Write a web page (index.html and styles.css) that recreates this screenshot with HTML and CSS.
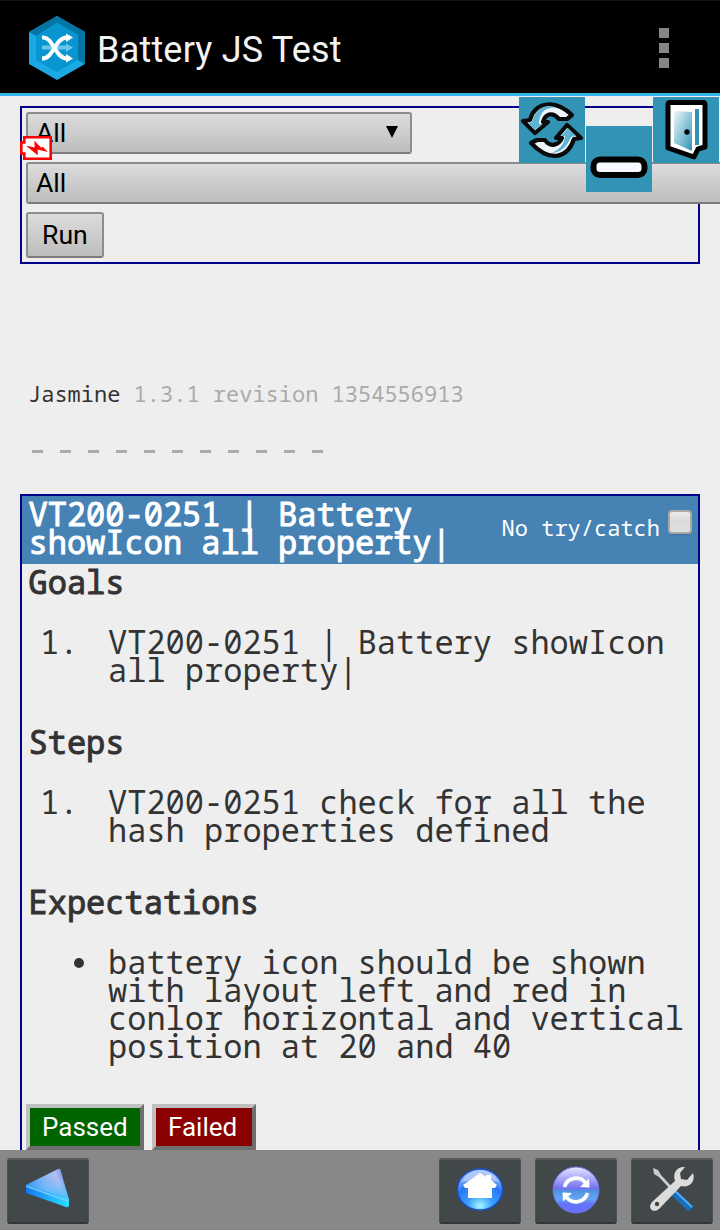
FILE: index.html
```html
<!DOCTYPE html>
<html lang="en">
<head>
<meta charset="utf-8">
<title>Battery JS Test</title>
<link rel="stylesheet" href="styles.css">
</head>
<body>
<div class="screen">
  <header class="appbar">
    <svg class="logo" width="56" height="64" viewBox="0 0 56 64">
      <path fill="#1aa9e4" d="M28 0 56 16V48L28 64 0 48V16Z"/>
      <path fill="#0575a6" d="M0 16 28 0 56 16V48L49 44V19L28 7 7 20Z"/>
      <path fill="#0796d2" d="M28 7 49 19V44L28 56 7 44V20Z"/>
      <path fill="#6bc5e9" d="M13 29.500H37V27.500L44 31.500 37 36V33.500H13Z"/>
      <g fill="none" stroke="#fff" stroke-width="4"><path d="M13 21.500C24 20 26 42.500 38 42.500"/><path d="M13 42.500C25 42.500 26 21.500 38 21.500"/></g>
      <path fill="#fff" d="M37 17.500 44 21.500 37 26ZM37 38 44 42.500 37 46.500Z"/>
    </svg>
    <h1 class="app-title">Battery JS Test</h1>
    <div class="overflow"><i></i><i></i><i></i></div>
  </header>

  <main class="page">
    <section class="filters">
      <div class="control select">All<span class="arrow"></span></div>
      <div class="control select wide">All</div>
      <div class="control run">Run</div>
    </section>

    <p class="version">Jasmine <span>1.3.1 revision 1354556913</span></p>
    <div class="dots"><i></i><i></i><i></i><i></i><i></i><i></i><i></i><i></i><i></i><i></i><i></i></div>

    <section class="spec">
      <div class="spec-head">
        <h2 class="bold">VT200-0251 | Battery<br>showIcon all property|</h2>
        <span class="try">No try/catch</span><span class="check"></span>
      </div>
      <div class="spec-body">
        <h3 class="bold">Goals</h3>
        <div class="item"><span class="num">1.</span><p>VT200-0251 | Battery showIcon<br>all property|</p></div>
        <h3 class="bold">Steps</h3>
        <div class="item"><span class="num">1.</span><p>VT200-0251 check for all the<br>hash properties defined</p></div>
        <h3 class="bold">Expectations</h3>
        <div class="item"><span class="bullet"></span><p>battery icon should be shown<br>with layout left and red in<br>conlor horizontal and vertical<br>position at 20 and 40</p></div>
      </div>
      <div class="verdict"><div class="passed">Passed</div><div class="failed">Failed</div></div>
    </section>
  </main>

  <footer class="toolbar">
    <div class="key">
      <svg width="80" height="64" viewBox="0 0 80 64">
        <defs>
          <linearGradient id="bk" x1="0" y1=".6" x2="1" y2=".3"><stop offset="0" stop-color="#168df5"/><stop offset=".4" stop-color="#7fb2f5"/><stop offset=".75" stop-color="#b3bff2"/><stop offset="1" stop-color="#5385ec"/></linearGradient>
          <linearGradient id="bk2" x1="0" y1="0" x2="0" y2="1"><stop offset=".3" stop-color="#6fb4f8" stop-opacity="0"/><stop offset="1" stop-color="#35c6ff"/></linearGradient>
          <linearGradient id="be"><stop offset="0" stop-color="#1478f2"/><stop offset="1" stop-color="#2be0ff"/></linearGradient>
        </defs>
        <path fill="url(#bk)" d="M18 25 50 9Q52 8 52.500 10L61 40Z"/><path fill="url(#bk2)" d="M18 25 50 9Q52 8 52.500 10L61 40Z"/>
        <path fill="url(#be)" d="M18 25 61 39V45Q61 48 58 47L18 33Z"/>
        <path fill="none" stroke="#79c9ff" stroke-width="1.500" d="M18 26 60 41"/>
      </svg>
    </div>
    <div class="key push">
      <svg width="80" height="64" viewBox="0 0 80 64">
        <defs><radialGradient id="hm" cx=".5" cy=".9" r=".8"><stop offset="0" stop-color="#a8f4ff"/><stop offset=".35" stop-color="#39a0ff"/><stop offset=".7" stop-color="#2875f5"/><stop offset="1" stop-color="#95baff"/></radialGradient></defs>
        <ellipse cx="40" cy="29.500" rx="22.500" ry="20.500" fill="url(#hm)" stroke="#1652ce" stroke-width="1.500"/>
        <path fill="#bcd2ff" opacity=".75" d="M22 22Q28 10 40 10.500 53 10 59 22 40 18 22 22Z"/>
        <path fill="#fff" d="M40 13 46 17V15H51V20L57 25 55 28H52V38H28V28H25L23 25Z"/>
      </svg>
    </div>
    <div class="key">
      <svg width="80" height="64" viewBox="0 0 80 64">
        <defs><linearGradient id="rf" x1="0" y1="0" x2="0" y2="1"><stop offset="0" stop-color="#e6e6ff"/><stop offset=".25" stop-color="#aaa9fa"/><stop offset=".48" stop-color="#716fee"/><stop offset=".5" stop-color="#4f91df"/><stop offset=".7" stop-color="#63a5f4"/><stop offset=".8" stop-color="#6575fa"/><stop offset="1" stop-color="#646dfb"/></linearGradient></defs>
        <circle cx="40" cy="30" r="23" fill="url(#rf)" stroke="#6878e5"/>
        <g fill="none" stroke="#fff" stroke-width="3.800"><path d="M28.500 27A12 12 0 0 1 50 23.500"/><path d="M51.500 33A12 12 0 0 1 30 36.500"/></g>
        <path fill="#fff" d="M44 27 53 18.500 53.500 27.500ZM36 33 27 41.500 26.500 32.500Z"/>
      </svg>
    </div>
    <div class="key">
      <svg width="80" height="64" viewBox="0 0 80 64">
        <path fill="#ccc" d="M21 8 26 10 29 15 41 28 39 30 27 17 22 14Z"/>
        <path stroke="#176fc0" stroke-width="7" d="M40 31 59 49"/><path stroke="#55a8ec" stroke-width="2" d="M42 30 60 47"/>
        <path fill="#dcdcdb" d="M53 7 48 13 49 19 55 20 61 13C64 22 57 28 49 26L27 49C21 54 15 48 20 42L43 21C40 12 46 6 53 7Z"/>
        <circle cx="25" cy="44" r="2.200" fill="#444"/>
      </svg>
    </div>
  </footer>

  <svg class="battery" width="32" height="24" viewBox="0 0 32 24">
    <path fill="#fff" stroke="#f00" stroke-width="2.600" d="M4.300 1.300H30.700V22.700H4.300V17.500H1.300V6.500H4.300Z"/>
    <path fill="#f00" d="M6 9.700 14.700 11.500 14.300 4.700 21.500 12 22.500 10.500 28 16 17.700 13.500V19.300Z"/>
  </svg>
  <svg class="float refresh" viewBox="0 0 66 66">
    <g stroke="#0a0a0a" stroke-width="4.200" stroke-linejoin="round">
      <path fill="#eef8fc" d="M4 24 11 23C15 7 34 0 53 18L48 22 40 22C33 14 26 17 24 25L29 25 16 36Z"/>
      <path fill="#eef8fc" d="M12 46 18 43 26 43C31 51 40 48 43 41L37 41 48 28 62 41 55 42C49 60 32 67 12 46Z"/>
    </g>
    <path fill="#61b3d2" d="M9 26 13 25C17 11 26 7 36 10 23 12 21 17 20 27L23 27 16 33Z"/>
    <path fill="#61b3d2" d="M49 31 57 39 52 40C48 50 42 55 33 56 43 51 45 46 46 39L42 39Z"/>
  </svg>
  <svg class="float minus" viewBox="0 0 66 66"><rect x="7.500" y="33.500" width="51" height="15.500" rx="6.500" fill="#f7fbff" stroke="#000" stroke-width="6"/></svg>
  <svg class="float door" viewBox="0 0 66 66">
    <defs><linearGradient id="dr" x1="0" y1="0" x2="1" y2="1"><stop offset="0" stop-color="#eef7fa"/><stop offset=".5" stop-color="#8fc6d8"/><stop offset="1" stop-color="#2f94b5"/></linearGradient></defs>
    <path fill="#fff" stroke="#000" stroke-width="5" stroke-linejoin="round" d="M17 5.500H50Q52 5.500 52 8V50L45 52 41 60 15 51V8Q15 5.500 17 5.500Z"/>
    <path fill="url(#dr)" d="M21 14 39 15V54L21 46Z"/><path fill="#3093b2" d="M42 12H46V48H42Z"/><circle cx="34" cy="35" r="2.700"/>
  </svg>
</div>
</body>
</html>
```

FILE: styles.css
```css
* { box-sizing: border-box; }
body, h1, h2, h3, p { margin: 0; }
body { background: #eee; overflow: hidden; }
.screen {
  position: relative; display: flex; flex-direction: column;
  width: 720px; height: 1230px; overflow: hidden;
  font: 32px/28px "Droid Sans Mono", "Noto Sans Mono", "DejaVu Sans Mono", monospace;
  color: #333;
}
.appbar {
  display: flex; align-items: center; flex: none; height: 96px; padding: 0 50px 0 29px;
  background: #000; border-top: 1px solid #151515; border-bottom: 3px solid #33b5e5;
}
.logo { margin-top: 1px; }
.app-title { margin: 6px 0 0 12px; font: 400 36px/42px Roboto, sans-serif; letter-spacing: .2px; color: #f3f3f3; }
.overflow { display: grid; gap: 5px; margin: 1px 1px 0 auto; }
.overflow i { width: 10px; height: 10px; background: #868686; }

.page { flex: 1; min-height: 0; overflow: hidden; padding: 10px 20px 0; }
.filters {
  display: flex; flex-direction: column; align-items: flex-start; gap: 8px;
  height: 158px; padding: 4px; border: 2px solid #00008b;
}
.control {
  display: flex; align-items: center; flex: none; height: 42px; padding: 0 8px;
  border: 2px solid #8d8d8d; border-bottom-color: #7c7c7c; border-radius: 3px;
  background: linear-gradient(#dcdcdc, #bdbdbd);
  font: 26.600px/30px Roboto, sans-serif; color: #000;
}
.select { width: 386px; }
.wide { width: 760px; }
.run { width: 78px; height: 46px; padding-left: 14px; }
.arrow { margin: -2px 4px 0 auto; border: 6px solid transparent; border-top: 12px solid #000; border-bottom: 0; }

.version { margin: 115px 0 0 8px; font-size: 22px; line-height: 28px; white-space: nowrap; }
.version span { color: #aaa; }
.dots { display: flex; gap: 17px; margin: 43px 0 41px 12px; }
.dots i { width: 11px; height: 3px; background: #aaa; }

.spec { height: 700px; border: 2px solid #00008b; }
.spec-head {
  display: flex; align-items: center; height: 68px; padding: 0 6px;
  background: #4682b4; color: #fff; white-space: nowrap;
}
.bold { padding-left: .5px; font-size: 32px; font-weight: 400; line-height: 28px; -webkit-text-stroke: 1px currentColor; }
.spec-head h2 { margin-top: -4px; }
.try { margin: -7px 8px 0 auto; font-size: 22px; }
.check {
  width: 24px; height: 24px; margin-top: -16px; border: 2px solid #aaa; border-radius: 4px;
  background: linear-gradient(#ececec, #dadada 45%, #dfdfdf); box-shadow: 0 1px 1px #3c6f99;
}
.spec-body { padding: 4px 6px 0; white-space: nowrap; }
.item { display: flex; margin: 32px 0 44px; }
.num { width: 80px; padding-left: 12px; }
.bullet { width: 10px; height: 10px; margin: 10px 24px 0 46px; border-radius: 50%; background: #333; }
.verdict { display: flex; gap: 8px; margin: 0 0 0 4px; color: #fff; font: 26px/38px Roboto, sans-serif; }
.verdict div { height: 46px; padding: 0 12px; border: 4px solid; border-color: #c0c0c0 #6e6e6e #6e6e6e #c0c0c0; }
.passed { width: 118px; background: #006400; }
.failed { width: 104px; background: #8b0000; }

.toolbar { display: flex; gap: 14px; flex: none; height: 80px; padding: 8px 7px; background: #888; }
.key {
  width: 82px; height: 66px; border: 1px solid #4d5052; border-top: 2px solid #55585a;
  border-bottom: 2px solid #343638; border-radius: 3px; background: #42474a;
}
.key svg { display: block; }
.push { margin-left: auto; }

.battery { position: absolute; left: 20px; top: 136px; }
.float { position: absolute; width: 66px; height: 66px; background: #3194b5; }
.refresh { left: 519px; top: 97px; }
.minus { left: 586px; top: 126px; }
.door { left: 653px; top: 97px; }
```
